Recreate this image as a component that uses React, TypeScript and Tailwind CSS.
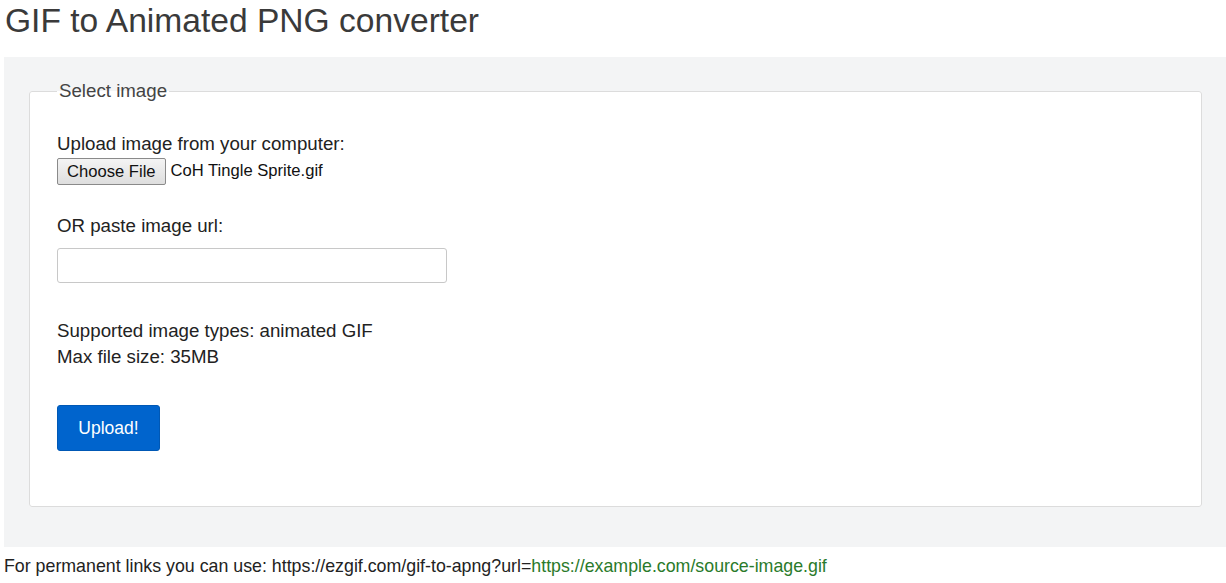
import React from 'react';

const App = () => {
    return (
        <div className="w-[1226px] h-[583px] overflow-hidden bg-white text-[#222] font-['Liberation_Sans',Arial,sans-serif]">
            {/* Title */}
            <h1 className="pl-[5px] pt-[1px] text-[33.6px] leading-[40px] text-[#3a3a3a]">GIF to Animated PNG converter</h1>

            {/* Main panel */}
            <div className="ml-[4px] mt-[16px] w-[1230px] h-[490px] bg-[#f3f4f5] pl-[25px] pt-[24px]">
                <fieldset className="w-[1173px] h-[426px] border border-[#dcdcdc] rounded-[3px] bg-white px-[27px] m-0">
                    <legend className="px-[2px] text-[18.7px] leading-[20px] text-[#444]">Select image</legend>

                    <div className="pt-[30px] text-[18.7px] leading-[26px]">Upload image from your computer:</div>
                    <div className="flex items-center gap-[5px] mt-[1px]">
                        <button className="h-[27px] px-[9px] border border-[#8a8a8a] rounded-[2px] bg-gradient-to-b from-[#f4f4f4] to-[#dedede] text-[16.6px] leading-[20px] text-[#111]">Choose File</button>
                        <span className="text-[16.6px] text-[#111]">CoH Tingle Sprite.gif</span>
                    </div>

                    <div className="mt-[28px] text-[18.7px] leading-[26px]">OR paste image url:</div>
                    <input className="block mt-[9px] w-[390px] h-[35px] border border-[#c8c8c8] rounded-[3px] bg-white" />

                    <div className="mt-[35px] text-[18.7px] leading-[26px]">Supported image types: animated GIF</div>
                    <div className="text-[18.7px] leading-[26px]">Max file size: 35MB</div>

                    <button className="block mt-[35px] w-[103px] h-[46px] rounded-[3px] bg-[#0064cd] border border-[#0058b5] text-white text-[17.5px]">Upload!</button>
                </fieldset>
            </div>

            {/* Footer */}
            <div className="pl-[4px] pt-[9px] text-[17.8px] leading-[20px] text-[#222]">
                For permanent links you can use: https://ezgif.com/gif-to-apng?url=<span className="text-[#2a7a2a]">https://example.com/source-image.gif</span>
            </div>
        </div>
    );
};

export default App;
